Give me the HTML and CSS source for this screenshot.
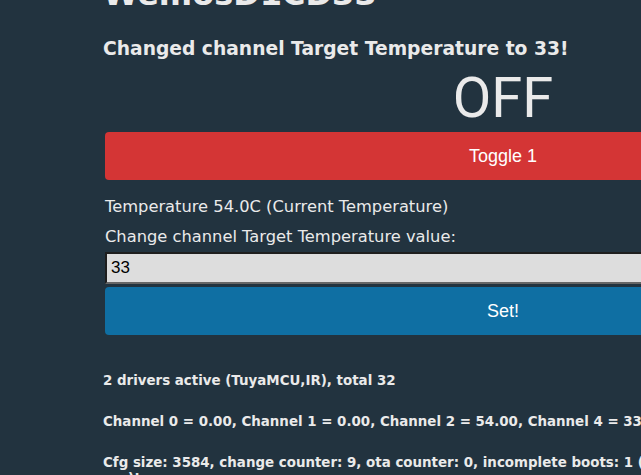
FILE: index.html
```html
<!DOCTYPE html>
<html>
<head>
<meta charset="utf-8">
<link rel="stylesheet" href="styles.css">
</head>
<body>
<div class="page">
  <h1 class="title">WemosD1CD33</h1>
  <h3 class="notice">Changed channel Target Temperature to 33!</h3>
  <div class="state">OFF</div>
  <button class="btn btn-red">Toggle 1</button>
  <p class="line first">Temperature 54.0C (Current Temperature)</p>
  <p class="line">Change channel Target Temperature value:</p>
  <input class="field" type="text" value="33">
  <button class="btn btn-blue">Set!</button>
  <h5 class="info first-info">2 drivers active (TuyaMCU,IR), total 32</h5>
  <h5 class="info">Channel 0 = 0.00, Channel 1 = 0.00, Channel 2 = 54.00, Channel 4 = 33.00</h5>
  <h5 class="info">Cfg size: 3584, change counter: 9, ota counter: 0, incomplete boots: 1 (might change to 0 if you wait to 30 sec)!</h5>
</div>
</body>
</html>
```

FILE: styles.css
```css
html, body {
  margin: 0;
  padding: 0;
  background: #22333f;
  overflow: hidden;
}
body {
  width: 641px;
  height: 475px;
}
.page {
  margin-left: 105px;
  width: 796px;
  color: #eaeaea;
  font-family: "DejaVu Sans", Verdana, sans-serif;
}
.title {
  margin: -26px 0 0 -2px;
  font-size: 32px;
  line-height: 40px;
  font-weight: bold;
}
.notice {
  margin: 23px 0 0 -2px;
  font-size: 18.7px;
  line-height: 24px;
  font-weight: bold;
}
.state {
  margin-top: 11px;
  text-align: center;
  font-family: Roboto, "Liberation Sans", sans-serif;
  font-size: 56px;
  line-height: 53px;
  color: #eaeaea;
}
.btn {
  display: block;
  width: 796px;
  height: 48px;
  border: 0;
  border-radius: 4px;
  color: #ffffff;
  font-family: "Liberation Sans", Arial, sans-serif;
  font-size: 18px;
  padding: 0;
  margin: 0;
}
.btn-red {
  margin-top: 7px;
  background: #d43535;
}
.btn-blue {
  margin-top: 3px;
  background: #0f6fa3;
}
.line {
  margin: 0;
  font-size: 16.3px;
  line-height: 30px;
}
.line.first {
  margin-top: 12px;
}
.field {
  display: block;
  box-sizing: border-box;
  width: 796px;
  height: 32px;
  margin: 0;
  padding: 0 4px;
  background: #dddddd;
  border: 2px solid #1e1e1e;
  border-color: #1e1e1e #666666 #666666 #1e1e1e;
  color: #000;
  font-family: "Liberation Sans", Arial, sans-serif;
  font-size: 17px;
}
.info {
  margin: 0 -26px 25px -2px;
  font-size: 13.4px;
  line-height: 16px;
  font-weight: bold;
}
.info.first-info {
  margin-top: 38px;
}
```
